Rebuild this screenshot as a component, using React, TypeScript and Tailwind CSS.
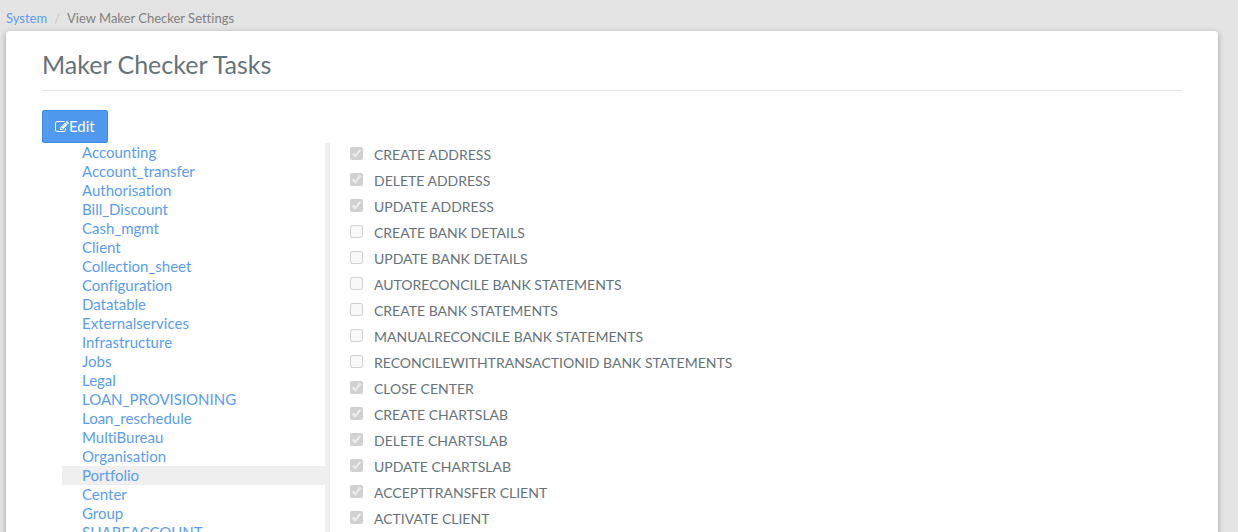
import React from "react";

const groups: string[] = [
  "Accounting",
  "Account_transfer",
  "Authorisation",
  "Bill_Discount",
  "Cash_mgmt",
  "Client",
  "Collection_sheet",
  "Configuration",
  "Datatable",
  "Externalservices",
  "Infrastructure",
  "Jobs",
  "Legal",
  "LOAN_PROVISIONING",
  "Loan_reschedule",
  "MultiBureau",
  "Organisation",
  "Portfolio",
  "Center",
  "Group",
  "SHAREACCOUNT",
];

const tasks: { name: string; on: boolean }[] = [
  { name: "CREATE ADDRESS", on: true },
  { name: "DELETE ADDRESS", on: true },
  { name: "UPDATE ADDRESS", on: true },
  { name: "CREATE BANK DETAILS", on: false },
  { name: "UPDATE BANK DETAILS", on: false },
  { name: "AUTORECONCILE BANK STATEMENTS", on: false },
  { name: "CREATE BANK STATEMENTS", on: false },
  { name: "MANUALRECONCILE BANK STATEMENTS", on: false },
  { name: "RECONCILEWITHTRANSACTIONID BANK STATEMENTS", on: false },
  { name: "CLOSE CENTER", on: true },
  { name: "CREATE CHARTSLAB", on: true },
  { name: "DELETE CHARTSLAB", on: true },
  { name: "UPDATE CHARTSLAB", on: true },
  { name: "ACCEPTTRANSFER CLIENT", on: true },
  { name: "ACTIVATE CLIENT", on: true },
];

function EditIcon() {
  return (
    <svg viewBox="0 0 1792 1792" fill="currentColor" className="size-3.5" aria-hidden="true">
      <path d="M888 1184l116-116-152-152-116 116v56h96v96h56zm440-720q-16-16-33 1l-350 350q-17 17-1 33t33-1l350-350q17-17 1-33zm80 594v190q0 119-84.5 203.5t-203.5 84.5h-832q-119 0-203.5-84.5t-84.5-203.5v-832q0-119 84.5-203.5t203.5-84.5h832q63 0 117 25 15 7 18 23 3 17-9 29l-49 49q-14 14-32 8-23-6-45-6h-832q-66 0-113 47t-47 113v832q0 66 47 113t113 47h832q66 0 113-47t47-113v-126q0-13 9-22l64-64q15-15 35-7t20 29zm-96-738l288 288-672 672h-288v-288zm444 132l-92 92-288-288 92-92q28-28 68-28t68 28l152 152q28 28 28 68t-28 68z" />
    </svg>
  );
}

function Breadcrumb() {
  return (
    <nav aria-label="Breadcrumb" className="pt-2.5 pb-1 text-[13px] leading-[17px]">
      <ol className="flex gap-[7px]">
        <li>
          <a href="#system" className="text-[#5a9df0]">System</a>
        </li>
        <li aria-hidden="true" className="text-[#c4c4c4]">/</li>
        <li aria-current="page" className="text-[#808080]">View Maker Checker Settings</li>
      </ol>
    </nav>
  );
}

function GroupList() {
  return (
    <ul className="w-72 shrink-0 border-r-[5px] border-[#efefef] pl-5 text-[15px] leading-[19px]">
      {groups.map((group) => (
        <li key={group} className={group === "Portfolio" ? "bg-[#efefef] pl-5" : "pl-5"}>
          <a href={`#${group}`} className="block text-[#5a9df0]">{group}</a>
        </li>
      ))}
    </ul>
  );
}

function TaskList() {
  return (
    <ul className="grow pl-5 text-sm leading-6 text-[#66727a]">
      {tasks.map((task) => (
        <li key={task.name} className="pb-0.5">
          <label className="flex items-start gap-[11px]">
            <input type="checkbox" disabled defaultChecked={task.on} className="mt-1 size-[13px] shrink-0" />
            {task.name}
          </label>
        </li>
      ))}
    </ul>
  );
}

export default function App() {
  return (
    <div className="h-screen overflow-hidden bg-[#e4e4e4] pr-5 pl-1.5 font-['Lato',sans-serif] [font-variant-ligatures:none]">
      <Breadcrumb />
      <main className="min-h-screen rounded-sm bg-white px-9 pt-[17px] pb-8 shadow-[0_2px_6px_rgba(0,0,0,0.3)]">
        <h1 className="border-b border-[#e4e4e4] pb-2.5 text-[25px] leading-8 text-[#66727a]">Maker Checker Tasks</h1>
        <button
          type="button"
          className="mt-[19px] flex h-[33px] items-center rounded-xs border border-[#3a8bea] bg-[#4f99ee] px-3 text-[15px] text-white"
        >
          <EditIcon />
          Edit
        </button>
        <div className="flex">
          <GroupList />
          <TaskList />
        </div>
      </main>
    </div>
  );
}
